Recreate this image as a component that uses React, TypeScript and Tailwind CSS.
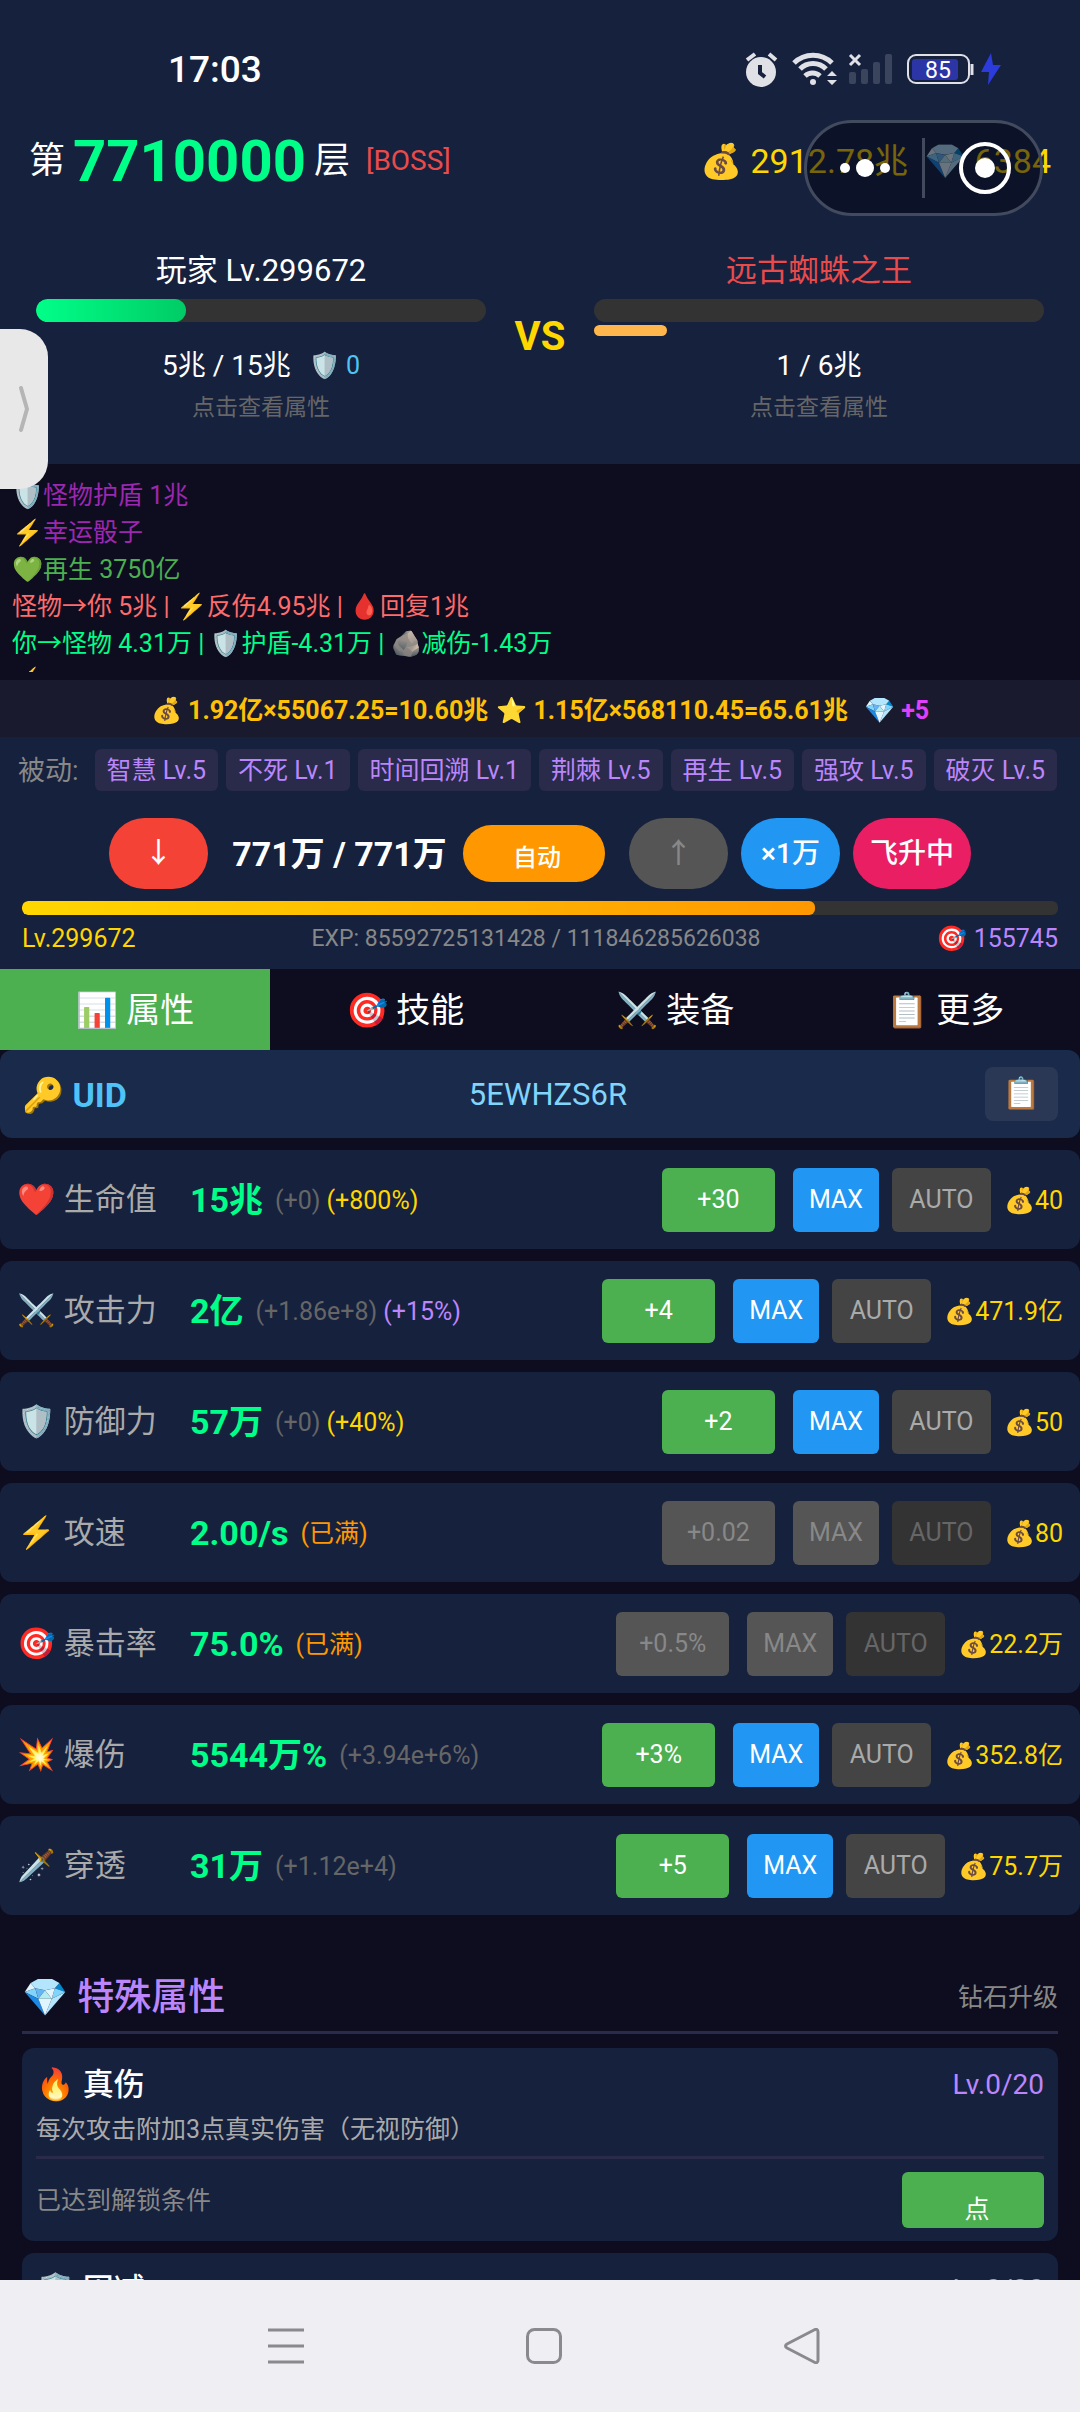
import { clsx } from 'clsx'
import type { ReactNode } from 'react'

interface Stat {
  readonly icon: string
  readonly label: string
  readonly value: string
  readonly base?: string
  readonly bonus?: string
  readonly bonusClass?: string
  readonly step: string
  readonly cost: string
  readonly full?: boolean
}

const stats: Stat[] = [
  { icon: '❤️', label: '生命值', value: '15兆', base: '(+0)', bonus: '(+800%)', bonusClass: 'text-[#ffd700]', step: '+30', cost: '40' },
  { icon: '⚔️', label: '攻击力', value: '2亿', base: '(+1.86e+8)', bonus: '(+15%)', bonusClass: 'text-[#bb86fc]', step: '+4', cost: '471.9亿' },
  { icon: '🛡️', label: '防御力', value: '57万', base: '(+0)', bonus: '(+40%)', bonusClass: 'text-[#ffd700]', step: '+2', cost: '50' },
  { icon: '⚡', label: '攻速', value: '2.00/s', bonus: '(已满)', bonusClass: 'text-[#ff9800]', step: '+0.02', cost: '80', full: true },
  { icon: '🎯', label: '暴击率', value: '75.0%', bonus: '(已满)', bonusClass: 'text-[#ff9800]', step: '+0.5%', cost: '22.2万', full: true },
  { icon: '💥', label: '爆伤', value: '5544万%', base: '(+3.94e+6%)', step: '+3%', cost: '352.8亿' },
  { icon: '🗡️', label: '穿透', value: '31万', base: '(+1.12e+4)', step: '+5', cost: '75.7万' }
]

const logs = [
  { text: '🛡️怪物护盾 1兆', className: 'text-[#9c27b0]' },
  { text: '⚡幸运骰子', className: 'text-[#9c27b0]' },
  { text: '💚再生 3750亿', className: 'text-[#4caf50]' },
  { text: '怪物→你 5兆 | ⚡反伤4.95兆 | 🩸回复1兆', className: 'text-[#ff6b6b]' },
  { text: '你→怪物 4.31万 | 🛡️护盾-4.31万 | 🪨减伤-1.43万', className: 'text-[#00ff88]' },
  { text: '⚡', className: 'text-[#9c27b0]' }
]

const passives = ['智慧 Lv.5', '不死 Lv.1', '时间回溯 Lv.1', '荆棘 Lv.5', '再生 Lv.5', '强攻 Lv.5', '破灭 Lv.5']

const tabs = ['📊 属性', '🎯 技能', '⚔️ 装备', '📋 更多']

function StatusBar() {
  return (
    <div className="flex h-[116px] items-center justify-between pt-6 pr-[75px] pl-[168px]">
      <span className="text-[37px] font-medium">17:03</span>

      <svg className="h-10 w-[260px]" fill="none" viewBox="0 0 260 40">
        {/* Alarm */}
        <circle cx="16" cy="22" fill="#dfe1e6" r="15" />
        <path d="M2 10l8-6M24 4l7 6" stroke="#dfe1e6" strokeWidth="4" />
        <path d="M15 15v8l5 4" stroke="#16213e" strokeWidth="4" />

        {/* Wifi */}
        <circle cx="68" cy="32" fill="#dfe1e6" r="3" />
        <path d="M49 13a27 27 0 0 1 38 0M55 19a18 18 0 0 1 26 0M60 26a11 11 0 0 1 15 0" stroke="#dfe1e6" strokeWidth="5" />
        <path d="m87 21 5 5h-10zM87 35l5-5h-10z" fill="#dfe1e6" />

        {/* Mobile signal */}
        <path d="m105 5 10 10m0-10-10 10" stroke="#dfe1e6" strokeWidth="3" />
        <g fill="#3b445d">
          <rect height="12" rx="2" width="7" x="104" y="22" />
          <rect height="15" rx="2" width="7" x="116" y="19" />
          <rect height="22" rx="2" width="7" x="128" y="12" />
          <rect height="30" rx="2" width="7" x="140" y="4" />
        </g>

        {/* Battery */}
        <rect height="28" rx="8" stroke="#dfe1e6" strokeWidth="2" width="61" x="163" y="5" />
        <rect fill="#2c35a6" height="21" rx="3" width="46" x="167" y="9" />
        <path d="M227 14v11" stroke="#dfe1e6" strokeWidth="3" />
        <text fill="#fff" fontFamily="Roboto" fontSize="23" textAnchor="middle" x="193" y="28">85</text>
        <path d="m246 3-10 19h8l-1 13 13-20h-8z" fill="#2b3bdc" />
      </svg>
    </div>
  )
}

function Capsule() {
  return (
    <div className="absolute top-[120px] right-[37px] flex h-24 w-[239px] items-center rounded-full border-3 border-[#424a5e] bg-[#050814]/55">
      <button aria-label="更多操作" className="flex h-full w-[115px] items-center justify-center" type="button">
        <svg className="h-5 w-[50px]" fill="#fff" viewBox="0 0 50 20">
          <circle cx="5" cy="10" r="5" />
          <circle cx="25" cy="10" r="9" />
          <circle cx="45" cy="10" r="5" />
        </svg>
      </button>
      <span className="h-15 w-[3px] bg-[#424a5e]" />
      <button aria-label="关闭" className="flex h-full flex-1 items-center justify-center pl-1" type="button">
        <svg className="size-[52px]" viewBox="0 0 52 52">
          <circle cx="26" cy="26" fill="none" r="24" stroke="#fff" strokeWidth="4" />
          <circle cx="26" cy="26" fill="#fff" r="10" />
        </svg>
      </button>
    </div>
  )
}

function Header() {
  return (
    <header className="flex h-[90px] items-center justify-between px-[29px]">
      <div className="flex items-center gap-2">
        <span className="text-[36px]">第</span>
        <span className="text-[58px] font-bold text-[#00ff88]">7710000</span>
        <span className="text-[36px]">层</span>
        <span className="ml-2 text-[28px] text-[#e94b4b]">[BOSS]</span>
      </div>
      <div className="flex gap-4 text-[34px] text-[#ffd700]">
        <span>💰 2912.78兆</span>
        <span>💎 6384</span>
      </div>
    </header>
  )
}

interface FighterProps {
  readonly name: string
  readonly nameClass?: string
  readonly hp: number
  readonly shield?: number
  readonly children: ReactNode
}

function Fighter({ name, nameClass, hp, shield = 0, children }: FighterProps) {
  return (
    <div className="flex flex-1 flex-col items-center">
      <div className={clsx('text-[31px] leading-[46px]', nameClass)}>{name}</div>
      <div className="mt-[5px] h-[23px] w-full overflow-hidden rounded-xl bg-[#333]">
        <div className="h-full rounded-xl bg-linear-to-r from-[#00ff88] to-[#00cc66]" style={{ width: `${hp}%` }} />
      </div>
      <div className="mt-[3px] h-[11px] w-full">
        <div className="h-full rounded-md bg-[#ffb74d]" style={{ width: `${shield}%` }} />
      </div>
      <div className="mt-2.5 flex h-10 items-center gap-[18px] text-[28px]">{children}</div>
      <button className="mt-1 text-[23px] leading-9 text-[#666]" type="button">点击查看属性</button>
    </div>
  )
}

function Battle() {
  return (
    <section className="flex h-[258px] px-9 pt-[42px]">
      <Fighter hp={33.3} name="玩家 Lv.299672">
        <span>5兆 / 15兆</span>
        <span className="text-[25px] text-[#4fc3f7]">🛡️ 0</span>
      </Fighter>
      <div className="mt-[61px] w-[108px] text-center text-[40px] leading-[56px] font-bold text-[#ffd700]">VS</div>
      <Fighter hp={0} name="远古蜘蛛之王" nameClass="text-[#e94b4b]" shield={16.2}>
        <span>1 / 6兆</span>
      </Fighter>
    </section>
  )
}

function Controls() {
  return (
    <section className="bg-[#16213e] px-[22px] pt-3 pb-3">
      <div className="-mx-1 flex h-[42px] items-center gap-2">
        <span className="mr-2 shrink-0 pt-0.5 text-[27px] text-[#888]">被动:</span>
        {passives.map(passive => (
          <span className="flex h-full items-center rounded-md bg-[#2a2a4a] px-3 pt-0.5 text-[25px] whitespace-nowrap text-[#bb86fc]" key={passive}>
            {passive}
          </span>
        ))}
      </div>

      <div className="mt-[27px] flex h-[71px] items-center justify-center text-[28px] font-medium">
        <button className="h-full w-[99px] rounded-full bg-[#f44336]" type="button">↓</button>
        <span className="w-[255px] pt-0.5 pl-2 text-center text-[34px] font-bold">771万 / 771万</span>
        <button className="h-[57px] w-[142px] rounded-full bg-[#ff9800] pt-2 pl-1.5 text-[24px]" type="button">自动</button>
        <button className="ml-6 h-full w-[99px] rounded-full bg-[#555] text-[#888]" type="button">↑</button>
        <button className="ml-[13px] h-full w-[99px] rounded-full bg-[#2196f3]" type="button">×1万</button>
        <button className="ml-[13px] h-full w-[118px] rounded-full bg-[#e91e63]" type="button">飞升中</button>
      </div>

      <div className="mt-3 h-3.5 overflow-hidden rounded-md bg-[#333]">
        <div className="h-full rounded-md bg-linear-to-r from-[#ffd700] to-[#ff9800]" style={{ width: '76.5%' }} />
      </div>
      <div className="mt-1.5 flex h-9 items-center justify-between text-[25px]">
        <span className="text-[#ffd700]">Lv.299672</span>
        <span className="text-[23px] text-[#888]">EXP: 85592725131428 / 111846285626038</span>
        <span className="text-[#bb86fc]">🎯 155745</span>
      </div>
    </section>
  )
}

function StatRow({ icon, label, value, base, bonus, bonusClass, step, cost, full = false }: Stat) {
  return (
    <li className="flex h-[99px] items-center rounded-xl bg-[#16213e] px-[17px] text-[25px] whitespace-nowrap">
      <span className="w-[173px] pt-0.5 text-[31px] text-[#aaa]">{icon} {label}</span>
      <span className="pt-0.5 text-[34px] font-bold text-[#00ff88]">{value}</span>
      {base !== undefined && <span className="ml-3 pt-0.5 text-[#666]">{base}</span>}
      {bonus !== undefined && <span className={clsx('pt-0.5', base === undefined ? 'ml-3' : 'ml-1.5', bonusClass)}>{bonus}</span>}
      <div className="ml-auto flex items-center">
        <button className={clsx('h-16 w-[113px] rounded-md', full ? 'bg-[#555] text-[#888]' : 'bg-[#4caf50]')} disabled={full} type="button">{step}</button>
        <button className={clsx('ml-[18px] h-16 w-[86px] rounded-md', full ? 'bg-[#555] text-[#888]' : 'bg-[#2196f3]')} disabled={full} type="button">MAX</button>
        <button className={clsx('ml-[13px] h-16 w-[99px] rounded-md', full ? 'bg-[#333] text-[#666]' : 'bg-[#444] text-[#aaa]')} disabled={full} type="button">AUTO</button>
        <span className="ml-[13px] pt-0.5 text-[#ffd700]">💰{cost}</span>
      </div>
    </li>
  )
}

interface SpecialCardProps {
  readonly title: string
  readonly level: string
  readonly description: string
}

function SpecialCard({ title, level, description }: SpecialCardProps) {
  return (
    <article className="shrink-0 rounded-xl bg-[#16213e] px-3.5 pt-3.5 pb-[13px] text-[25px]">
      <div className="flex h-[46px] items-center justify-between">
        <h3 className="text-[31px] font-medium">{title}</h3>
        <span className="text-[28px] text-[#bb86fc]">{level}</span>
      </div>
      <p className="mt-1 leading-9 text-[#aaa]">{description}</p>
      <div className="mt-2 flex items-center justify-between border-t-3 border-[#2a2a4a] pt-[13px]">
        <span className="pt-0.5 text-[#888]">已达到解锁条件</span>
        <button className="h-14 w-[142px] rounded-md bg-[#4caf50] pt-5 pl-2 leading-9" type="button">点</button>
      </div>
    </article>
  )
}

function NavBar() {
  return (
    <nav className="flex h-[132px] items-center justify-center gap-[222px] bg-[#efeef3] pl-2">
      <button aria-label="最近任务" type="button">
        <svg className="size-9" fill="none" stroke="#8a8a8e" strokeWidth="3" viewBox="0 0 36 36"><path d="M0 2h36M0 18h36M0 34h36" /></svg>
      </button>
      <button aria-label="主屏幕" type="button">
        <svg className="size-9" fill="none" stroke="#8a8a8e" strokeWidth="3" viewBox="0 0 36 36"><rect height="33" rx="7" width="33" x="1.5" y="1.5" /></svg>
      </button>
      <button aria-label="返回" type="button">
        <svg className="size-9" fill="none" stroke="#8a8a8e" strokeLinejoin="round" strokeWidth="3" viewBox="0 0 36 36"><path d="M30 2Q34 0 34 4v28q0 4-4 2L3 20q-3-2 0-4z" /></svg>
      </button>
    </nav>
  )
}

export default function App() {
  return (
    <div className="relative flex h-screen flex-col overflow-hidden bg-[#0d0d1f] font-['Roboto','Noto_Sans_CJK_SC',sans-serif] text-white">
      <div className="shrink-0 bg-[#16213e]">
        <StatusBar />
        <Header />
        <Battle />
      </div>

      <div className="h-[216px] shrink-0 px-3 pt-[13px] pb-2">
        <div className="h-full overflow-hidden text-[25px] leading-[37px]">
          {logs.map((log, index) => <p className={log.className} key={index}>{log.text}</p>)}
        </div>
      </div>

      <div className="flex h-[57px] shrink-0 items-center justify-center gap-2 bg-[#1a1a2e] pt-1 text-[25px] font-bold text-[#ffc107]">
        <span>💰 1.92亿×55067.25=10.60兆</span>
        <span>⭐ 1.15亿×568110.45=65.61兆</span>
        <span className="ml-2 text-[#e040fb]">💎 +5</span>
      </div>

      <Controls />

      <div className="flex h-[81px] shrink-0 text-[34px]" role="tablist">
        {tabs.map((tab, index) => (
          <button aria-selected={index === 0} className={clsx('flex-1 pt-0.5', index === 0 && 'bg-[#4caf50]')} key={tab} role="tab" type="button">
            {tab}
          </button>
        ))}
      </div>

      <main className="flex min-h-0 flex-1 flex-col overflow-hidden">
        <div className="flex h-[88px] shrink-0 items-center rounded-xl bg-[#1a2a4a] px-[22px] text-[31px]">
          <span className="pt-0.5 text-[34px] font-bold text-[#4fc3f7]">🔑 UID</span>
          <span className="flex-1 pt-0.5 pr-4 text-center text-[#81d4fa]">5EWHZS6R</span>
          <button aria-label="复制" className="h-[54px] w-[73px] rounded-lg bg-[#2a3855]" type="button">📋</button>
        </div>

        <ul className="mt-3 flex flex-col gap-3">
          {stats.map(stat => <StatRow key={stat.label} {...stat} />)}
        </ul>

        <section className="mt-[49px] flex flex-col gap-3 px-[22px]">
          <div className="mb-0.5 flex h-[70px] shrink-0 items-center justify-between border-b-3 border-[#2a2a4a]">
            <h2 className="text-[37px] font-medium text-[#bb86fc]">💎 特殊属性</h2>
            <span className="text-[25px] text-[#888]">钻石升级</span>
          </div>
          <SpecialCard description="每次攻击附加3点真实伤害（无视防御）" level="Lv.0/20" title="🔥 真伤" />
          <SpecialCard description="每次受击减少固定伤害" level="Lv.0/20" title="🛡️ 固减" />
        </section>
      </main>

      <NavBar />

      <Capsule />
      <button aria-label="展开侧边栏" className="absolute top-[329px] left-0 flex h-40 w-12 items-center justify-center rounded-r-[28px] bg-[#e8e8e8]" type="button">
        <svg className="h-12 w-3" fill="none" stroke="#b5b5b5" strokeLinecap="round" strokeLinejoin="round" strokeWidth="4" viewBox="0 0 12 48"><path d="m3 3 6 21-6 21" /></svg>
      </button>
    </div>
  )
}
